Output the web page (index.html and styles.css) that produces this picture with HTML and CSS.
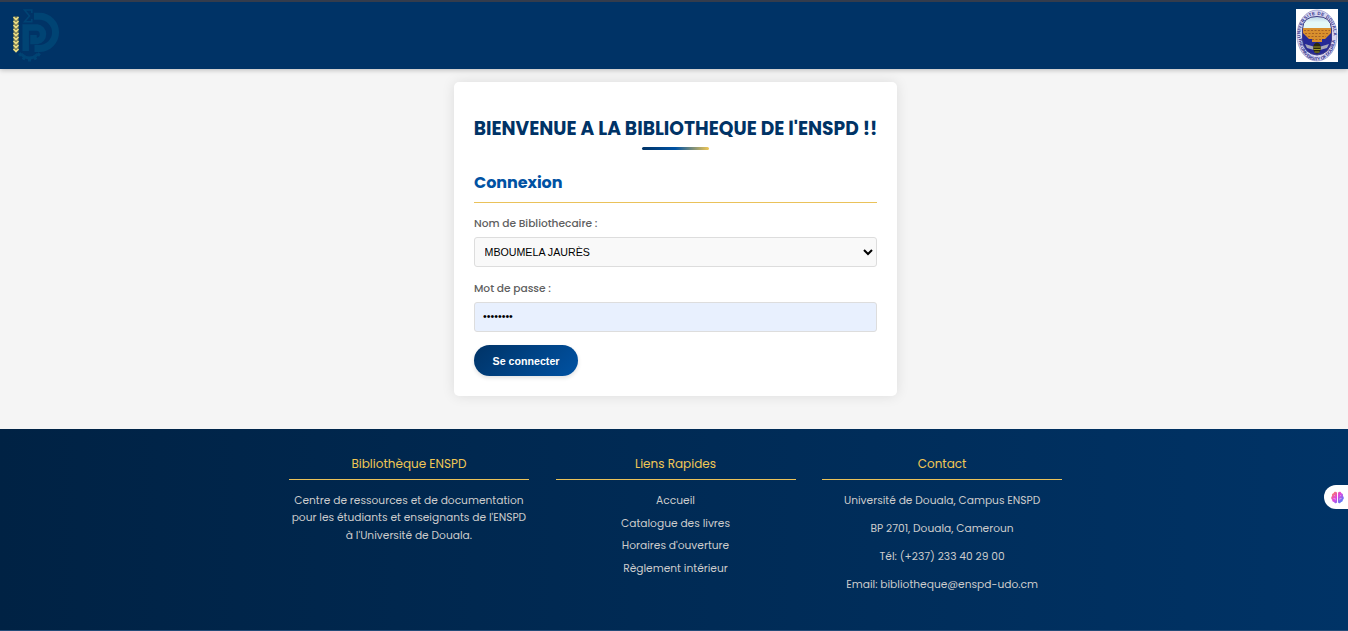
FILE: index.html
```html
<!DOCTYPE html>
<html lang="fr">
<head>
<meta charset="utf-8">
<title>Bibliothèque ENSPD</title>
<link rel="stylesheet" href="styles.css">
</head>
<body>
<header class="header">
  <svg class="logo-school" viewBox="0 0 50 56" width="50" height="56" aria-hidden="true">
    <g fill="none" stroke="#004474">
      <path d="M24 9.200H29.400A16.150 16.150 0 0 1 29.400 41.500H24.500" stroke-width="7"/>
      <path d="M15.700 44V20.500H27A6.800 6.800 0 0 1 27 34H23.500V28" stroke-width="6.500"/>
      <path d="M21.800 6V3H14.500L19.500 9L14.500 14.800H21.800V12" stroke-width="1.600"/>
      <path d="M11 47Q19.500 55 28 47" stroke-width="3"/>
      <path d="M11.500 46.500L9 48.500M15 49.500L13 52.500M19.500 50.500V54.500M24 49.500L26 52.500M27.500 46.500L30 48.500" stroke-width="3"/>
    </g>
    <rect x="3.500" y="9.500" width="5" height="34" fill="#777a55"/>
    <path d="M3.500 10L6 12.500L8.500 10M3.500 14L6 16.500L8.500 14M3.500 18L6 20.500L8.500 18M3.500 22L6 24.500L8.500 22M3.500 26L6 28.500L8.500 26M3.500 30L6 32.500L8.500 30M3.500 34L6 36.500L8.500 34M3.500 38L6 40.500L8.500 38M3.500 42L6 44.500L8.500 42" fill="none" stroke="#e9dc83" stroke-width="1.600"/>
  </svg>
  <svg class="logo-university" viewBox="0 0 42 53" width="42" height="53" aria-hidden="true">
    <defs>
      <linearGradient id="sky" x1="0" y1="0" x2="0" y2="1"><stop stop-color="#7f9ed0"/><stop offset=".25" stop-color="#e4f8f6"/></linearGradient>
      <clipPath id="shield"><path d="M6.500 20Q7 7.500 21 7.500T35.500 20V31Q34 45 21 46Q8 45 6.500 31Z"/></clipPath>
      <path id="arc-top" d="M4.500 29C2 -2 40 -2 37.500 29"/>
      <path id="arc-bottom" d="M2.500 29C5 59 37 59 39.500 29"/>
    </defs>
    <rect width="42" height="53" fill="#fff"/>
    <ellipse cx="21" cy="26.500" rx="20" ry="25.500" fill="#d6d6f0" stroke="#9c9ccb" stroke-width=".8"/>
    <g clip-path="url(#shield)">
      <rect width="42" height="53" fill="url(#sky)"/>
      <rect y="20" width="42" height="33" fill="#262a96"/>
      <path d="M7 19H35V24L32 27L29 30H26V33H16V30H13L10 27L7 24Z" fill="#d9902d"/>
      <path d="M8 21.500H34M9 24.500H33M12 27.500H30M16 30.500H26" stroke="#a66223" stroke-width="1" stroke-dasharray="2 1.500"/>
      <path d="M19 38L9 35L11 39L18 41ZM23 38L33 35L31 39L24 41Z" fill="#a6a7b8"/>
      <ellipse cx="21" cy="39" rx="3.800" ry="5.500" fill="#29270f"/>
      <path d="M17.500 38H24.500M17.500 40.500H24.500M18.500 43H23.500" stroke="#9b9829" stroke-width="1.100"/>
    </g>
    <path d="M6.500 20Q7 7.500 21 7.500T35.500 20V31Q34 45 21 46Q8 45 6.500 31Z" fill="none" stroke="#3e3c83"/>
    <text class="seal-text"><textPath href="#arc-top" textLength="62">UNIVERSITE DE DOUALA</textPath></text>
    <text class="seal-text"><textPath href="#arc-bottom" textLength="62">THE UNIVERSITY OF DOUALA</textPath></text>
  </svg>
</header>
<main class="main">
  <section class="card">
    <h1 class="title">BIENVENUE A LA BIBLIOTHEQUE DE l'ENSPD !!</h1>
    <h2 class="subtitle">Connexion</h2>
    <form class="form">
      <label class="label" for="user">Nom de Bibliothecaire :</label>
      <select class="field select" id="user"><option>MBOUMELA JAURÈS</option></select>
      <label class="label" for="pass">Mot de passe :</label>
      <input class="field password" id="pass" type="password" value="password">
      <button class="submit" type="button">Se connecter</button>
    </form>
  </section>
</main>
<footer class="footer">
  <section class="column">
    <h3 class="heading">Bibliothèque ENSPD</h3>
    <p class="about">Centre de ressources et de documentation<br>pour les étudiants et enseignants de l'ENSPD<br>à l'Université de Douala.</p>
  </section>
  <section class="column">
    <h3 class="heading">Liens Rapides</h3>
    <ul class="links"><li>Accueil</li><li>Catalogue des livres</li><li>Horaires d'ouverture</li><li>Règlement intérieur</li></ul>
  </section>
  <section class="column">
    <h3 class="heading">Contact</h3>
    <ul class="contact"><li>Université de Douala, Campus ENSPD</li><li>BP 2701, Douala, Cameroun</li><li>Tél: (+237) 233 40 29 00</li><li>Email: bibliotheque@enspd-udo.cm</li></ul>
  </section>
</footer>
<aside class="assistant">
  <svg viewBox="0 0 14 14" width="13" height="13" aria-hidden="true">
    <defs><linearGradient id="brain" x1="0" y1="0" x2="1" y2="1"><stop stop-color="#ff8a3d"/><stop offset=".45" stop-color="#e044df"/><stop offset="1" stop-color="#298dff"/></linearGradient></defs>
    <path d="M6.500 2C5.500 0 3 .5 2.800 2.500C1 2.700 .7 4.500 1.300 5.500C-.3 6.500 0 8.700 1.300 9.300C1 11 2.300 12 3.300 11.800C4 13.700 6 13.500 6.500 12ZM7.500 2C8.500 0 11 .5 11.200 2.500C13 2.700 13.300 4.500 12.700 5.500C14.300 6.500 14 8.700 12.700 9.300C13 11 11.700 12 10.700 11.800C10 13.700 8 13.500 7.500 12Z" fill="url(#brain)"/>
    <path d="M3 4.500L4.500 5.500M2.500 8H4.500V10M11 4.500L9.500 5.500M11.500 8H9.500V10" fill="none" stroke="#fff" stroke-opacity=".6" stroke-width=".7"/>
  </svg>
</aside>
</body>
</html>
```
FILE: styles.css
```css
* { box-sizing: border-box; }
body {
  margin: 0;
  height: 631px;
  display: flex;
  flex-direction: column;
  overflow: hidden;
  background: #f5f5f5;
  font-family: Poppins, Inter, sans-serif;
  color: #555;
}
h1, h2, h3, p, ul { margin: 0; padding: 0; }
ul { list-style: none; }
.header {
  height: 69px;
  flex: none;
  display: flex;
  justify-content: space-between;
  align-items: flex-start;
  padding: 5px 10px 0;
  border-top: 2px solid #343c4c;
  background: #003366;
  box-shadow: 0 1px 5px rgba(0, 0, 0, .25);
}
.logo-university { margin-top: 2px; }
.seal-text { font: bold 4.500px "Liberation Sans", sans-serif; fill: #30308b; }
.main {
  height: 360px;
  flex: none;
  display: flex;
  justify-content: center;
  align-items: flex-start;
  padding: 13px 0 0 3px;
}
.card {
  width: 443px;
  height: 314px;
  padding: 33px 20px 20px;
  background: #fff;
  border-radius: 5px;
  box-shadow: 0 0 13px rgba(0, 0, 0, .1);
}
.title {
  display: flex;
  flex-direction: column;
  align-items: center;
  font-size: 18.670px;
  line-height: 28px;
  font-weight: 700;
  color: #003366;
  white-space: nowrap;
}
.title::after {
  content: "";
  width: 67px;
  height: 3px;
  margin-top: 4px;
  border-radius: 2px;
  background: linear-gradient(90deg, #003366, #0052a3 50%, #f0c755);
}
.subtitle {
  height: 37px;
  margin-top: 16px;
  padding-top: 4px;
  border-bottom: 1px solid #eac25a;
  font-size: 16px;
  line-height: 26px;
  font-weight: 700;
  letter-spacing: -.05px;
  color: #0052a3;
}
.form { display: flex; flex-direction: column; align-items: flex-start; }
.label {
  height: 16px;
  margin: 13px 0 5px;
  font-size: 10.670px;
  line-height: 16px;
  font-weight: 500;
  letter-spacing: -.03px;
  color: #606060;
}
.field {
  width: 403px;
  height: 30px;
  border: 1px solid #ddd;
  border-radius: 3px;
  font-family: "Liberation Sans", Arial, sans-serif;
  font-size: 10.670px;
  color: #000;
}
.select { padding: 0 0 0 5.500px; background: #f9f9f9; margin-bottom: 1px; }
.password { padding: 0 8px 2px; background: #e8f0fe; }
.submit {
  width: 104px;
  height: 31px;
  margin-top: 13px;
  padding: 0;
  border: 0;
  border-radius: 16px;
  background: linear-gradient(135deg, #003366, #0052a3);
  box-shadow: 0 2px 4px rgba(0, 0, 0, .12);
  font: bold 10.670px "Liberation Sans", Arial, sans-serif;
  color: #fff;
}
.footer {
  height: 202px;
  flex: none;
  display: flex;
  justify-content: center;
  gap: 26.600px;
  padding: 25px 0 0 3px;
  border-bottom: 1px solid #234b78;
  background: linear-gradient(90deg, #002244, #003366);
  color: #ccc;
  font-size: 10.670px;
  text-align: center;
}
.column { width: 240px; white-space: nowrap; }
.heading {
  height: 26px;
  margin-bottom: 12px;
  border-bottom: 1px solid #eac25a;
  font-size: 12px;
  line-height: 20px;
  font-weight: 400;
  color: #f0c755;
}
.about { line-height: 17.400px; }
.links { display: grid; gap: 6.600px; padding-top: 1px; line-height: 16px; }
.contact { display: grid; gap: 12px; padding-top: 1px; line-height: 16px; }
.assistant {
  position: absolute;
  right: 0;
  top: 485px;
  width: 24px;
  height: 24px;
  display: flex;
  align-items: center;
  padding-left: 7px;
  border-radius: 12px 0 0 12px;
  background: #fff;
}
```
